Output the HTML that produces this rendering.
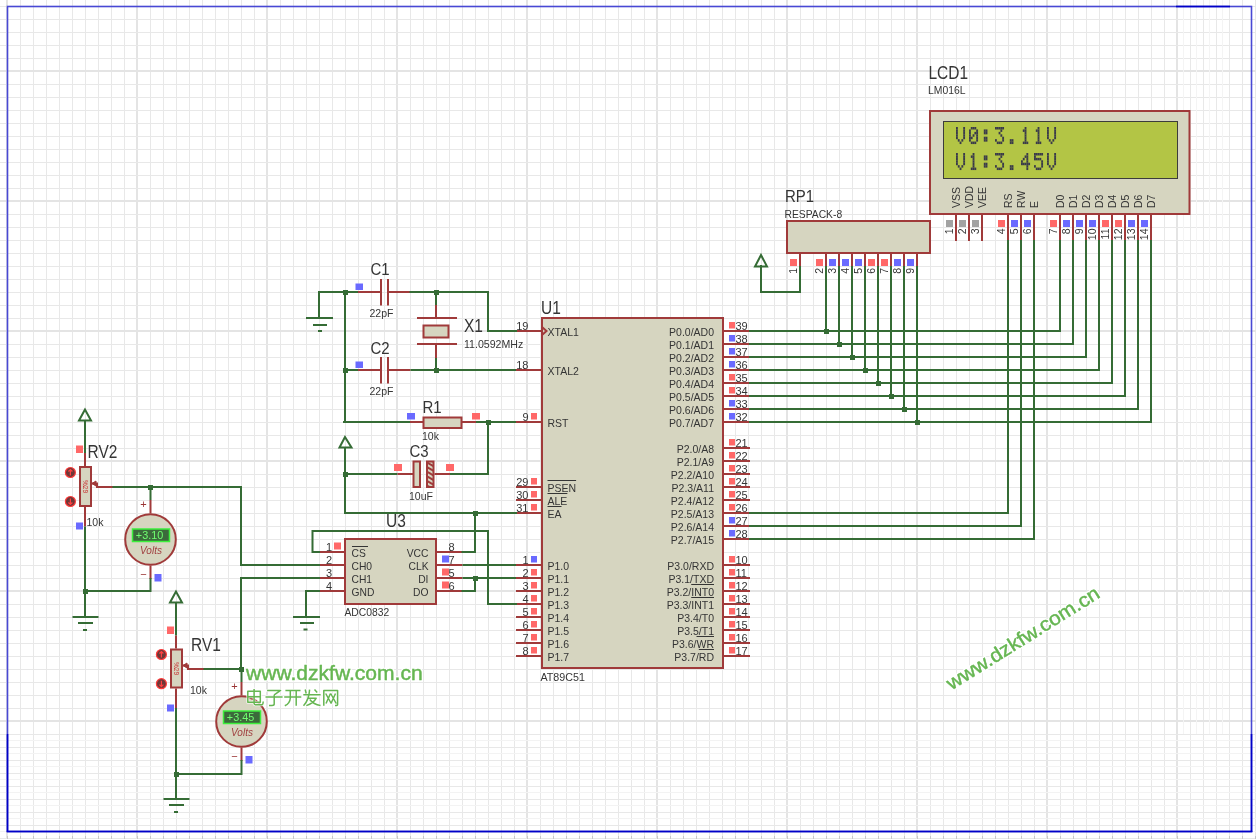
<!DOCTYPE html>
<html><head><meta charset="utf-8"><style>
html,body{margin:0;padding:0;background:#fff;}
svg{display:block;will-change:transform;}
text{font-family:"Liberation Sans",sans-serif;}
</style></head><body>
<svg width="1256" height="839" viewBox="0 0 1256 839">
<rect width="1256" height="839" fill="#fff"/>
<rect x="6" y="0" width="2" height="839" fill="#e4e4e4"/><rect x="20" y="0" width="1" height="839" fill="#e8e8e8"/><rect x="33" y="0" width="1" height="839" fill="#e8e8e8"/><rect x="46" y="0" width="1" height="839" fill="#e8e8e8"/><rect x="59" y="0" width="1" height="839" fill="#e8e8e8"/><rect x="72" y="0" width="1" height="839" fill="#e8e8e8"/><rect x="85" y="0" width="1" height="839" fill="#e8e8e8"/><rect x="98" y="0" width="1" height="839" fill="#e8e8e8"/><rect x="111" y="0" width="1" height="839" fill="#e8e8e8"/><rect x="124" y="0" width="1" height="839" fill="#e8e8e8"/><rect x="136" y="0" width="2" height="839" fill="#e4e4e4"/><rect x="150" y="0" width="1" height="839" fill="#e8e8e8"/><rect x="163" y="0" width="1" height="839" fill="#e8e8e8"/><rect x="176" y="0" width="1" height="839" fill="#e8e8e8"/><rect x="189" y="0" width="1" height="839" fill="#e8e8e8"/><rect x="202" y="0" width="1" height="839" fill="#e8e8e8"/><rect x="215" y="0" width="1" height="839" fill="#e8e8e8"/><rect x="228" y="0" width="1" height="839" fill="#e8e8e8"/><rect x="241" y="0" width="1" height="839" fill="#e8e8e8"/><rect x="254" y="0" width="1" height="839" fill="#e8e8e8"/><rect x="266" y="0" width="2" height="839" fill="#e4e4e4"/><rect x="280" y="0" width="1" height="839" fill="#e8e8e8"/><rect x="293" y="0" width="1" height="839" fill="#e8e8e8"/><rect x="306" y="0" width="1" height="839" fill="#e8e8e8"/><rect x="319" y="0" width="1" height="839" fill="#e8e8e8"/><rect x="332" y="0" width="1" height="839" fill="#e8e8e8"/><rect x="345" y="0" width="1" height="839" fill="#e8e8e8"/><rect x="358" y="0" width="1" height="839" fill="#e8e8e8"/><rect x="371" y="0" width="1" height="839" fill="#e8e8e8"/><rect x="384" y="0" width="1" height="839" fill="#e8e8e8"/><rect x="396" y="0" width="2" height="839" fill="#e4e4e4"/><rect x="410" y="0" width="1" height="839" fill="#e8e8e8"/><rect x="423" y="0" width="1" height="839" fill="#e8e8e8"/><rect x="436" y="0" width="1" height="839" fill="#e8e8e8"/><rect x="449" y="0" width="1" height="839" fill="#e8e8e8"/><rect x="462" y="0" width="1" height="839" fill="#e8e8e8"/><rect x="475" y="0" width="1" height="839" fill="#e8e8e8"/><rect x="488" y="0" width="1" height="839" fill="#e8e8e8"/><rect x="501" y="0" width="1" height="839" fill="#e8e8e8"/><rect x="514" y="0" width="1" height="839" fill="#e8e8e8"/><rect x="526" y="0" width="2" height="839" fill="#e4e4e4"/><rect x="540" y="0" width="1" height="839" fill="#e8e8e8"/><rect x="553" y="0" width="1" height="839" fill="#e8e8e8"/><rect x="566" y="0" width="1" height="839" fill="#e8e8e8"/><rect x="579" y="0" width="1" height="839" fill="#e8e8e8"/><rect x="592" y="0" width="1" height="839" fill="#e8e8e8"/><rect x="605" y="0" width="1" height="839" fill="#e8e8e8"/><rect x="618" y="0" width="1" height="839" fill="#e8e8e8"/><rect x="631" y="0" width="1" height="839" fill="#e8e8e8"/><rect x="644" y="0" width="1" height="839" fill="#e8e8e8"/><rect x="656" y="0" width="2" height="839" fill="#e4e4e4"/><rect x="670" y="0" width="1" height="839" fill="#e8e8e8"/><rect x="683" y="0" width="1" height="839" fill="#e8e8e8"/><rect x="696" y="0" width="1" height="839" fill="#e8e8e8"/><rect x="709" y="0" width="1" height="839" fill="#e8e8e8"/><rect x="722" y="0" width="1" height="839" fill="#e8e8e8"/><rect x="735" y="0" width="1" height="839" fill="#e8e8e8"/><rect x="748" y="0" width="1" height="839" fill="#e8e8e8"/><rect x="761" y="0" width="1" height="839" fill="#e8e8e8"/><rect x="774" y="0" width="1" height="839" fill="#e8e8e8"/><rect x="786" y="0" width="2" height="839" fill="#e4e4e4"/><rect x="800" y="0" width="1" height="839" fill="#e8e8e8"/><rect x="813" y="0" width="1" height="839" fill="#e8e8e8"/><rect x="826" y="0" width="1" height="839" fill="#e8e8e8"/><rect x="839" y="0" width="1" height="839" fill="#e8e8e8"/><rect x="852" y="0" width="1" height="839" fill="#e8e8e8"/><rect x="865" y="0" width="1" height="839" fill="#e8e8e8"/><rect x="878" y="0" width="1" height="839" fill="#e8e8e8"/><rect x="891" y="0" width="1" height="839" fill="#e8e8e8"/><rect x="904" y="0" width="1" height="839" fill="#e8e8e8"/><rect x="916" y="0" width="2" height="839" fill="#e4e4e4"/><rect x="930" y="0" width="1" height="839" fill="#e8e8e8"/><rect x="943" y="0" width="1" height="839" fill="#e8e8e8"/><rect x="956" y="0" width="1" height="839" fill="#e8e8e8"/><rect x="969" y="0" width="1" height="839" fill="#e8e8e8"/><rect x="982" y="0" width="1" height="839" fill="#e8e8e8"/><rect x="995" y="0" width="1" height="839" fill="#e8e8e8"/><rect x="1008" y="0" width="1" height="839" fill="#e8e8e8"/><rect x="1021" y="0" width="1" height="839" fill="#e8e8e8"/><rect x="1034" y="0" width="1" height="839" fill="#e8e8e8"/><rect x="1046" y="0" width="2" height="839" fill="#e4e4e4"/><rect x="1060" y="0" width="1" height="839" fill="#e8e8e8"/><rect x="1073" y="0" width="1" height="839" fill="#e8e8e8"/><rect x="1086" y="0" width="1" height="839" fill="#e8e8e8"/><rect x="1099" y="0" width="1" height="839" fill="#e8e8e8"/><rect x="1112" y="0" width="1" height="839" fill="#e8e8e8"/><rect x="1125" y="0" width="1" height="839" fill="#e8e8e8"/><rect x="1138" y="0" width="1" height="839" fill="#e8e8e8"/><rect x="1151" y="0" width="1" height="839" fill="#e8e8e8"/><rect x="1164" y="0" width="1" height="839" fill="#e8e8e8"/><rect x="1176" y="0" width="2" height="839" fill="#e4e4e4"/><rect x="1190" y="0" width="1" height="839" fill="#e8e8e8"/><rect x="1203" y="0" width="1" height="839" fill="#e8e8e8"/><rect x="1216" y="0" width="1" height="839" fill="#e8e8e8"/><rect x="1229" y="0" width="1" height="839" fill="#e8e8e8"/><rect x="1242" y="0" width="1" height="839" fill="#e8e8e8"/><rect x="1255" y="0" width="1" height="839" fill="#e8e8e8"/><rect x="0" y="6" width="1256" height="1" fill="#e8e8e8"/><rect x="0" y="19" width="1256" height="1" fill="#e8e8e8"/><rect x="0" y="32" width="1256" height="1" fill="#e8e8e8"/><rect x="0" y="45" width="1256" height="1" fill="#e8e8e8"/><rect x="0" y="58" width="1256" height="1" fill="#e8e8e8"/><rect x="0" y="70" width="1256" height="2" fill="#e4e4e4"/><rect x="0" y="84" width="1256" height="1" fill="#e8e8e8"/><rect x="0" y="97" width="1256" height="1" fill="#e8e8e8"/><rect x="0" y="110" width="1256" height="1" fill="#e8e8e8"/><rect x="0" y="123" width="1256" height="1" fill="#e8e8e8"/><rect x="0" y="136" width="1256" height="1" fill="#e8e8e8"/><rect x="0" y="149" width="1256" height="1" fill="#e8e8e8"/><rect x="0" y="162" width="1256" height="1" fill="#e8e8e8"/><rect x="0" y="175" width="1256" height="1" fill="#e8e8e8"/><rect x="0" y="188" width="1256" height="1" fill="#e8e8e8"/><rect x="0" y="200" width="1256" height="2" fill="#e4e4e4"/><rect x="0" y="214" width="1256" height="1" fill="#e8e8e8"/><rect x="0" y="227" width="1256" height="1" fill="#e8e8e8"/><rect x="0" y="240" width="1256" height="1" fill="#e8e8e8"/><rect x="0" y="253" width="1256" height="1" fill="#e8e8e8"/><rect x="0" y="266" width="1256" height="1" fill="#e8e8e8"/><rect x="0" y="279" width="1256" height="1" fill="#e8e8e8"/><rect x="0" y="292" width="1256" height="1" fill="#e8e8e8"/><rect x="0" y="305" width="1256" height="1" fill="#e8e8e8"/><rect x="0" y="318" width="1256" height="1" fill="#e8e8e8"/><rect x="0" y="330" width="1256" height="2" fill="#e4e4e4"/><rect x="0" y="344" width="1256" height="1" fill="#e8e8e8"/><rect x="0" y="357" width="1256" height="1" fill="#e8e8e8"/><rect x="0" y="370" width="1256" height="1" fill="#e8e8e8"/><rect x="0" y="383" width="1256" height="1" fill="#e8e8e8"/><rect x="0" y="396" width="1256" height="1" fill="#e8e8e8"/><rect x="0" y="409" width="1256" height="1" fill="#e8e8e8"/><rect x="0" y="422" width="1256" height="1" fill="#e8e8e8"/><rect x="0" y="435" width="1256" height="1" fill="#e8e8e8"/><rect x="0" y="448" width="1256" height="1" fill="#e8e8e8"/><rect x="0" y="460" width="1256" height="2" fill="#e4e4e4"/><rect x="0" y="474" width="1256" height="1" fill="#e8e8e8"/><rect x="0" y="487" width="1256" height="1" fill="#e8e8e8"/><rect x="0" y="500" width="1256" height="1" fill="#e8e8e8"/><rect x="0" y="513" width="1256" height="1" fill="#e8e8e8"/><rect x="0" y="526" width="1256" height="1" fill="#e8e8e8"/><rect x="0" y="539" width="1256" height="1" fill="#e8e8e8"/><rect x="0" y="552" width="1256" height="1" fill="#e8e8e8"/><rect x="0" y="565" width="1256" height="1" fill="#e8e8e8"/><rect x="0" y="578" width="1256" height="1" fill="#e8e8e8"/><rect x="0" y="590" width="1256" height="2" fill="#e4e4e4"/><rect x="0" y="604" width="1256" height="1" fill="#e8e8e8"/><rect x="0" y="617" width="1256" height="1" fill="#e8e8e8"/><rect x="0" y="630" width="1256" height="1" fill="#e8e8e8"/><rect x="0" y="643" width="1256" height="1" fill="#e8e8e8"/><rect x="0" y="656" width="1256" height="1" fill="#e8e8e8"/><rect x="0" y="669" width="1256" height="1" fill="#e8e8e8"/><rect x="0" y="682" width="1256" height="1" fill="#e8e8e8"/><rect x="0" y="695" width="1256" height="1" fill="#e8e8e8"/><rect x="0" y="708" width="1256" height="1" fill="#e8e8e8"/><rect x="0" y="720" width="1256" height="2" fill="#e4e4e4"/><rect x="0" y="734" width="1256" height="1" fill="#e8e8e8"/><rect x="0" y="747" width="1256" height="1" fill="#e8e8e8"/><rect x="0" y="760" width="1256" height="1" fill="#e8e8e8"/><rect x="0" y="773" width="1256" height="1" fill="#e8e8e8"/><rect x="0" y="786" width="1256" height="1" fill="#e8e8e8"/><rect x="0" y="799" width="1256" height="1" fill="#e8e8e8"/><rect x="0" y="812" width="1256" height="1" fill="#e8e8e8"/><rect x="0" y="825" width="1256" height="1" fill="#e8e8e8"/><rect x="0" y="838" width="1256" height="1" fill="#e8e8e8"/>
<rect x="0" y="740" width="1256" height="1" fill="#f3f3f3"/><rect x="0" y="753" width="1256" height="1" fill="#f3f3f3"/><rect x="0" y="766" width="1256" height="1" fill="#f3f3f3"/><rect x="0" y="779" width="1256" height="1" fill="#f3f3f3"/><rect x="0" y="792" width="1256" height="1" fill="#f3f3f3"/><rect x="0" y="805" width="1256" height="1" fill="#f3f3f3"/><rect x="0" y="818" width="1256" height="1" fill="#f3f3f3"/><rect x="0" y="831" width="1256" height="1" fill="#f3f3f3"/><rect x="1183" y="0" width="1" height="734" fill="#f4f4f4"/><rect x="1196" y="0" width="1" height="734" fill="#f4f4f4"/><rect x="1209" y="0" width="1" height="734" fill="#f4f4f4"/><rect x="1222" y="0" width="1" height="734" fill="#f4f4f4"/>
<rect x="7.5" y="6.5" width="1244" height="825" fill="none" stroke="#4848d4" stroke-width="1.6"/>
<rect x="6.7" y="734" width="1.6" height="98" fill="#0000c8"/>
<rect x="1250.7" y="734" width="1.6" height="98" fill="#0000c8"/>
<rect x="6.7" y="830.7" width="1245.6" height="1.6" fill="#0000c8"/>
<rect x="1176" y="5.7" width="54" height="1.6" fill="#0000c8"/>
<rect x="7" y="836" width="1" height="3" fill="#c8c8c8"/><rect x="20" y="836" width="1" height="3" fill="#c8c8c8"/><rect x="33" y="836" width="1" height="3" fill="#c8c8c8"/><rect x="46" y="836" width="1" height="3" fill="#c8c8c8"/><rect x="59" y="836" width="1" height="3" fill="#c8c8c8"/><rect x="72" y="836" width="1" height="3" fill="#c8c8c8"/><rect x="85" y="836" width="1" height="3" fill="#c8c8c8"/><rect x="98" y="836" width="1" height="3" fill="#c8c8c8"/><rect x="111" y="836" width="1" height="3" fill="#c8c8c8"/><rect x="124" y="836" width="1" height="3" fill="#c8c8c8"/><rect x="137" y="836" width="1" height="3" fill="#c8c8c8"/><rect x="150" y="836" width="1" height="3" fill="#c8c8c8"/><rect x="163" y="836" width="1" height="3" fill="#c8c8c8"/><rect x="176" y="836" width="1" height="3" fill="#c8c8c8"/><rect x="189" y="836" width="1" height="3" fill="#c8c8c8"/><rect x="202" y="836" width="1" height="3" fill="#c8c8c8"/><rect x="215" y="836" width="1" height="3" fill="#c8c8c8"/><rect x="228" y="836" width="1" height="3" fill="#c8c8c8"/><rect x="241" y="836" width="1" height="3" fill="#c8c8c8"/><rect x="254" y="836" width="1" height="3" fill="#c8c8c8"/><rect x="267" y="836" width="1" height="3" fill="#c8c8c8"/><rect x="280" y="836" width="1" height="3" fill="#c8c8c8"/><rect x="293" y="836" width="1" height="3" fill="#c8c8c8"/><rect x="306" y="836" width="1" height="3" fill="#c8c8c8"/><rect x="319" y="836" width="1" height="3" fill="#c8c8c8"/><rect x="332" y="836" width="1" height="3" fill="#c8c8c8"/><rect x="345" y="836" width="1" height="3" fill="#c8c8c8"/><rect x="358" y="836" width="1" height="3" fill="#c8c8c8"/><rect x="371" y="836" width="1" height="3" fill="#c8c8c8"/><rect x="384" y="836" width="1" height="3" fill="#c8c8c8"/><rect x="397" y="836" width="1" height="3" fill="#c8c8c8"/><rect x="410" y="836" width="1" height="3" fill="#c8c8c8"/><rect x="423" y="836" width="1" height="3" fill="#c8c8c8"/><rect x="436" y="836" width="1" height="3" fill="#c8c8c8"/><rect x="449" y="836" width="1" height="3" fill="#c8c8c8"/><rect x="462" y="836" width="1" height="3" fill="#c8c8c8"/><rect x="475" y="836" width="1" height="3" fill="#c8c8c8"/><rect x="488" y="836" width="1" height="3" fill="#c8c8c8"/><rect x="501" y="836" width="1" height="3" fill="#c8c8c8"/><rect x="514" y="836" width="1" height="3" fill="#c8c8c8"/><rect x="527" y="836" width="1" height="3" fill="#c8c8c8"/><rect x="540" y="836" width="1" height="3" fill="#c8c8c8"/><rect x="553" y="836" width="1" height="3" fill="#c8c8c8"/><rect x="566" y="836" width="1" height="3" fill="#c8c8c8"/><rect x="579" y="836" width="1" height="3" fill="#c8c8c8"/><rect x="592" y="836" width="1" height="3" fill="#c8c8c8"/><rect x="605" y="836" width="1" height="3" fill="#c8c8c8"/><rect x="618" y="836" width="1" height="3" fill="#c8c8c8"/><rect x="631" y="836" width="1" height="3" fill="#c8c8c8"/><rect x="644" y="836" width="1" height="3" fill="#c8c8c8"/><rect x="657" y="836" width="1" height="3" fill="#c8c8c8"/><rect x="670" y="836" width="1" height="3" fill="#c8c8c8"/><rect x="683" y="836" width="1" height="3" fill="#c8c8c8"/><rect x="696" y="836" width="1" height="3" fill="#c8c8c8"/><rect x="709" y="836" width="1" height="3" fill="#c8c8c8"/><rect x="722" y="836" width="1" height="3" fill="#c8c8c8"/><rect x="735" y="836" width="1" height="3" fill="#c8c8c8"/><rect x="748" y="836" width="1" height="3" fill="#c8c8c8"/><rect x="761" y="836" width="1" height="3" fill="#c8c8c8"/><rect x="774" y="836" width="1" height="3" fill="#c8c8c8"/><rect x="787" y="836" width="1" height="3" fill="#c8c8c8"/><rect x="800" y="836" width="1" height="3" fill="#c8c8c8"/><rect x="813" y="836" width="1" height="3" fill="#c8c8c8"/><rect x="826" y="836" width="1" height="3" fill="#c8c8c8"/><rect x="839" y="836" width="1" height="3" fill="#c8c8c8"/><rect x="852" y="836" width="1" height="3" fill="#c8c8c8"/><rect x="865" y="836" width="1" height="3" fill="#c8c8c8"/><rect x="878" y="836" width="1" height="3" fill="#c8c8c8"/><rect x="891" y="836" width="1" height="3" fill="#c8c8c8"/><rect x="904" y="836" width="1" height="3" fill="#c8c8c8"/><rect x="917" y="836" width="1" height="3" fill="#c8c8c8"/><rect x="930" y="836" width="1" height="3" fill="#c8c8c8"/><rect x="943" y="836" width="1" height="3" fill="#c8c8c8"/><rect x="956" y="836" width="1" height="3" fill="#c8c8c8"/><rect x="969" y="836" width="1" height="3" fill="#c8c8c8"/><rect x="982" y="836" width="1" height="3" fill="#c8c8c8"/><rect x="995" y="836" width="1" height="3" fill="#c8c8c8"/><rect x="1008" y="836" width="1" height="3" fill="#c8c8c8"/><rect x="1021" y="836" width="1" height="3" fill="#c8c8c8"/><rect x="1034" y="836" width="1" height="3" fill="#c8c8c8"/><rect x="1047" y="836" width="1" height="3" fill="#c8c8c8"/><rect x="1060" y="836" width="1" height="3" fill="#c8c8c8"/><rect x="1073" y="836" width="1" height="3" fill="#c8c8c8"/><rect x="1086" y="836" width="1" height="3" fill="#c8c8c8"/><rect x="1099" y="836" width="1" height="3" fill="#c8c8c8"/><rect x="1112" y="836" width="1" height="3" fill="#c8c8c8"/><rect x="1125" y="836" width="1" height="3" fill="#c8c8c8"/><rect x="1138" y="836" width="1" height="3" fill="#c8c8c8"/><rect x="1151" y="836" width="1" height="3" fill="#c8c8c8"/><rect x="1164" y="836" width="1" height="3" fill="#c8c8c8"/><rect x="1177" y="836" width="1" height="3" fill="#c8c8c8"/><rect x="1190" y="836" width="1" height="3" fill="#c8c8c8"/><rect x="1203" y="836" width="1" height="3" fill="#c8c8c8"/><rect x="1216" y="836" width="1" height="3" fill="#c8c8c8"/><rect x="1229" y="836" width="1" height="3" fill="#c8c8c8"/><rect x="1242" y="836" width="1" height="3" fill="#c8c8c8"/><rect x="1255" y="836" width="1" height="3" fill="#c8c8c8"/>
<text transform="translate(928.5,79) scale(1,1.15)" font-size="15.5" text-anchor="start" fill="#353535">LCD1</text>
<text x="928" y="93.6" font-size="10.4" text-anchor="start" fill="#353535">LM016L</text>
<rect x="930" y="111" width="259.5" height="103" fill="#d6d5c0" stroke="#a03a3a" stroke-width="2"/>
<rect x="943.5" y="121.5" width="234" height="57" fill="#b3c545" stroke="#3c3c3c" stroke-width="1"/>
<g fill="#3a3a4a"><rect x="956.00" y="127.00" width="1.85" height="2.48"/><rect x="963.20" y="127.00" width="1.85" height="2.48"/><rect x="956.00" y="129.43" width="1.85" height="2.48"/><rect x="963.20" y="129.43" width="1.85" height="2.48"/><rect x="956.00" y="131.86" width="1.85" height="2.48"/><rect x="963.20" y="131.86" width="1.85" height="2.48"/><rect x="956.00" y="134.29" width="1.85" height="2.48"/><rect x="963.20" y="134.29" width="1.85" height="2.48"/><rect x="956.00" y="136.72" width="1.85" height="2.48"/><rect x="963.20" y="136.72" width="1.85" height="2.48"/><rect x="957.80" y="139.15" width="1.85" height="2.48"/><rect x="961.40" y="139.15" width="1.85" height="2.48"/><rect x="959.60" y="141.58" width="1.85" height="2.48"/><rect x="970.80" y="127.00" width="1.85" height="2.48"/><rect x="972.60" y="127.00" width="1.85" height="2.48"/><rect x="974.40" y="127.00" width="1.85" height="2.48"/><rect x="969.00" y="129.43" width="1.85" height="2.48"/><rect x="976.20" y="129.43" width="1.85" height="2.48"/><rect x="969.00" y="131.86" width="1.85" height="2.48"/><rect x="974.40" y="131.86" width="1.85" height="2.48"/><rect x="976.20" y="131.86" width="1.85" height="2.48"/><rect x="969.00" y="134.29" width="1.85" height="2.48"/><rect x="972.60" y="134.29" width="1.85" height="2.48"/><rect x="976.20" y="134.29" width="1.85" height="2.48"/><rect x="969.00" y="136.72" width="1.85" height="2.48"/><rect x="970.80" y="136.72" width="1.85" height="2.48"/><rect x="976.20" y="136.72" width="1.85" height="2.48"/><rect x="969.00" y="139.15" width="1.85" height="2.48"/><rect x="976.20" y="139.15" width="1.85" height="2.48"/><rect x="970.80" y="141.58" width="1.85" height="2.48"/><rect x="972.60" y="141.58" width="1.85" height="2.48"/><rect x="974.40" y="141.58" width="1.85" height="2.48"/><rect x="983.80" y="129.43" width="1.85" height="2.48"/><rect x="985.60" y="129.43" width="1.85" height="2.48"/><rect x="983.80" y="131.86" width="1.85" height="2.48"/><rect x="985.60" y="131.86" width="1.85" height="2.48"/><rect x="983.80" y="136.72" width="1.85" height="2.48"/><rect x="985.60" y="136.72" width="1.85" height="2.48"/><rect x="983.80" y="139.15" width="1.85" height="2.48"/><rect x="985.60" y="139.15" width="1.85" height="2.48"/><rect x="995.00" y="127.00" width="1.85" height="2.48"/><rect x="996.80" y="127.00" width="1.85" height="2.48"/><rect x="998.60" y="127.00" width="1.85" height="2.48"/><rect x="1000.40" y="127.00" width="1.85" height="2.48"/><rect x="1002.20" y="127.00" width="1.85" height="2.48"/><rect x="1000.40" y="129.43" width="1.85" height="2.48"/><rect x="998.60" y="131.86" width="1.85" height="2.48"/><rect x="1000.40" y="134.29" width="1.85" height="2.48"/><rect x="1002.20" y="136.72" width="1.85" height="2.48"/><rect x="995.00" y="139.15" width="1.85" height="2.48"/><rect x="1002.20" y="139.15" width="1.85" height="2.48"/><rect x="996.80" y="141.58" width="1.85" height="2.48"/><rect x="998.60" y="141.58" width="1.85" height="2.48"/><rect x="1000.40" y="141.58" width="1.85" height="2.48"/><rect x="1009.80" y="139.15" width="1.85" height="2.48"/><rect x="1011.60" y="139.15" width="1.85" height="2.48"/><rect x="1009.80" y="141.58" width="1.85" height="2.48"/><rect x="1011.60" y="141.58" width="1.85" height="2.48"/><rect x="1024.60" y="127.00" width="1.85" height="2.48"/><rect x="1022.80" y="129.43" width="1.85" height="2.48"/><rect x="1024.60" y="129.43" width="1.85" height="2.48"/><rect x="1024.60" y="131.86" width="1.85" height="2.48"/><rect x="1024.60" y="134.29" width="1.85" height="2.48"/><rect x="1024.60" y="136.72" width="1.85" height="2.48"/><rect x="1024.60" y="139.15" width="1.85" height="2.48"/><rect x="1022.80" y="141.58" width="1.85" height="2.48"/><rect x="1024.60" y="141.58" width="1.85" height="2.48"/><rect x="1026.40" y="141.58" width="1.85" height="2.48"/><rect x="1037.60" y="127.00" width="1.85" height="2.48"/><rect x="1035.80" y="129.43" width="1.85" height="2.48"/><rect x="1037.60" y="129.43" width="1.85" height="2.48"/><rect x="1037.60" y="131.86" width="1.85" height="2.48"/><rect x="1037.60" y="134.29" width="1.85" height="2.48"/><rect x="1037.60" y="136.72" width="1.85" height="2.48"/><rect x="1037.60" y="139.15" width="1.85" height="2.48"/><rect x="1035.80" y="141.58" width="1.85" height="2.48"/><rect x="1037.60" y="141.58" width="1.85" height="2.48"/><rect x="1039.40" y="141.58" width="1.85" height="2.48"/><rect x="1047.00" y="127.00" width="1.85" height="2.48"/><rect x="1054.20" y="127.00" width="1.85" height="2.48"/><rect x="1047.00" y="129.43" width="1.85" height="2.48"/><rect x="1054.20" y="129.43" width="1.85" height="2.48"/><rect x="1047.00" y="131.86" width="1.85" height="2.48"/><rect x="1054.20" y="131.86" width="1.85" height="2.48"/><rect x="1047.00" y="134.29" width="1.85" height="2.48"/><rect x="1054.20" y="134.29" width="1.85" height="2.48"/><rect x="1047.00" y="136.72" width="1.85" height="2.48"/><rect x="1054.20" y="136.72" width="1.85" height="2.48"/><rect x="1048.80" y="139.15" width="1.85" height="2.48"/><rect x="1052.40" y="139.15" width="1.85" height="2.48"/><rect x="1050.60" y="141.58" width="1.85" height="2.48"/></g>
<g fill="#3a3a4a"><rect x="956.00" y="153.00" width="1.85" height="2.48"/><rect x="963.20" y="153.00" width="1.85" height="2.48"/><rect x="956.00" y="155.43" width="1.85" height="2.48"/><rect x="963.20" y="155.43" width="1.85" height="2.48"/><rect x="956.00" y="157.86" width="1.85" height="2.48"/><rect x="963.20" y="157.86" width="1.85" height="2.48"/><rect x="956.00" y="160.29" width="1.85" height="2.48"/><rect x="963.20" y="160.29" width="1.85" height="2.48"/><rect x="956.00" y="162.72" width="1.85" height="2.48"/><rect x="963.20" y="162.72" width="1.85" height="2.48"/><rect x="957.80" y="165.15" width="1.85" height="2.48"/><rect x="961.40" y="165.15" width="1.85" height="2.48"/><rect x="959.60" y="167.58" width="1.85" height="2.48"/><rect x="972.60" y="153.00" width="1.85" height="2.48"/><rect x="970.80" y="155.43" width="1.85" height="2.48"/><rect x="972.60" y="155.43" width="1.85" height="2.48"/><rect x="972.60" y="157.86" width="1.85" height="2.48"/><rect x="972.60" y="160.29" width="1.85" height="2.48"/><rect x="972.60" y="162.72" width="1.85" height="2.48"/><rect x="972.60" y="165.15" width="1.85" height="2.48"/><rect x="970.80" y="167.58" width="1.85" height="2.48"/><rect x="972.60" y="167.58" width="1.85" height="2.48"/><rect x="974.40" y="167.58" width="1.85" height="2.48"/><rect x="983.80" y="155.43" width="1.85" height="2.48"/><rect x="985.60" y="155.43" width="1.85" height="2.48"/><rect x="983.80" y="157.86" width="1.85" height="2.48"/><rect x="985.60" y="157.86" width="1.85" height="2.48"/><rect x="983.80" y="162.72" width="1.85" height="2.48"/><rect x="985.60" y="162.72" width="1.85" height="2.48"/><rect x="983.80" y="165.15" width="1.85" height="2.48"/><rect x="985.60" y="165.15" width="1.85" height="2.48"/><rect x="995.00" y="153.00" width="1.85" height="2.48"/><rect x="996.80" y="153.00" width="1.85" height="2.48"/><rect x="998.60" y="153.00" width="1.85" height="2.48"/><rect x="1000.40" y="153.00" width="1.85" height="2.48"/><rect x="1002.20" y="153.00" width="1.85" height="2.48"/><rect x="1000.40" y="155.43" width="1.85" height="2.48"/><rect x="998.60" y="157.86" width="1.85" height="2.48"/><rect x="1000.40" y="160.29" width="1.85" height="2.48"/><rect x="1002.20" y="162.72" width="1.85" height="2.48"/><rect x="995.00" y="165.15" width="1.85" height="2.48"/><rect x="1002.20" y="165.15" width="1.85" height="2.48"/><rect x="996.80" y="167.58" width="1.85" height="2.48"/><rect x="998.60" y="167.58" width="1.85" height="2.48"/><rect x="1000.40" y="167.58" width="1.85" height="2.48"/><rect x="1009.80" y="165.15" width="1.85" height="2.48"/><rect x="1011.60" y="165.15" width="1.85" height="2.48"/><rect x="1009.80" y="167.58" width="1.85" height="2.48"/><rect x="1011.60" y="167.58" width="1.85" height="2.48"/><rect x="1026.40" y="153.00" width="1.85" height="2.48"/><rect x="1024.60" y="155.43" width="1.85" height="2.48"/><rect x="1026.40" y="155.43" width="1.85" height="2.48"/><rect x="1022.80" y="157.86" width="1.85" height="2.48"/><rect x="1026.40" y="157.86" width="1.85" height="2.48"/><rect x="1021.00" y="160.29" width="1.85" height="2.48"/><rect x="1026.40" y="160.29" width="1.85" height="2.48"/><rect x="1021.00" y="162.72" width="1.85" height="2.48"/><rect x="1022.80" y="162.72" width="1.85" height="2.48"/><rect x="1024.60" y="162.72" width="1.85" height="2.48"/><rect x="1026.40" y="162.72" width="1.85" height="2.48"/><rect x="1028.20" y="162.72" width="1.85" height="2.48"/><rect x="1026.40" y="165.15" width="1.85" height="2.48"/><rect x="1026.40" y="167.58" width="1.85" height="2.48"/><rect x="1034.00" y="153.00" width="1.85" height="2.48"/><rect x="1035.80" y="153.00" width="1.85" height="2.48"/><rect x="1037.60" y="153.00" width="1.85" height="2.48"/><rect x="1039.40" y="153.00" width="1.85" height="2.48"/><rect x="1041.20" y="153.00" width="1.85" height="2.48"/><rect x="1034.00" y="155.43" width="1.85" height="2.48"/><rect x="1034.00" y="157.86" width="1.85" height="2.48"/><rect x="1035.80" y="157.86" width="1.85" height="2.48"/><rect x="1037.60" y="157.86" width="1.85" height="2.48"/><rect x="1039.40" y="157.86" width="1.85" height="2.48"/><rect x="1041.20" y="160.29" width="1.85" height="2.48"/><rect x="1041.20" y="162.72" width="1.85" height="2.48"/><rect x="1034.00" y="165.15" width="1.85" height="2.48"/><rect x="1041.20" y="165.15" width="1.85" height="2.48"/><rect x="1035.80" y="167.58" width="1.85" height="2.48"/><rect x="1037.60" y="167.58" width="1.85" height="2.48"/><rect x="1039.40" y="167.58" width="1.85" height="2.48"/><rect x="1047.00" y="153.00" width="1.85" height="2.48"/><rect x="1054.20" y="153.00" width="1.85" height="2.48"/><rect x="1047.00" y="155.43" width="1.85" height="2.48"/><rect x="1054.20" y="155.43" width="1.85" height="2.48"/><rect x="1047.00" y="157.86" width="1.85" height="2.48"/><rect x="1054.20" y="157.86" width="1.85" height="2.48"/><rect x="1047.00" y="160.29" width="1.85" height="2.48"/><rect x="1054.20" y="160.29" width="1.85" height="2.48"/><rect x="1047.00" y="162.72" width="1.85" height="2.48"/><rect x="1054.20" y="162.72" width="1.85" height="2.48"/><rect x="1048.80" y="165.15" width="1.85" height="2.48"/><rect x="1052.40" y="165.15" width="1.85" height="2.48"/><rect x="1050.60" y="167.58" width="1.85" height="2.48"/></g>
<line x1="956" y1="214" x2="956" y2="241" stroke="#a03a3a" stroke-width="2"/>
<rect x="946" y="220" width="7" height="7" fill="#a2a2a2"/>
<text transform="translate(960,208) rotate(-90)" font-size="10.5" fill="#353535">VSS</text>
<text transform="translate(953.4,228.5) rotate(-90)" font-size="10.5" text-anchor="end" fill="#353535">1</text>
<line x1="969" y1="214" x2="969" y2="241" stroke="#a03a3a" stroke-width="2"/>
<rect x="959" y="220" width="7" height="7" fill="#a2a2a2"/>
<text transform="translate(973,208) rotate(-90)" font-size="10.5" fill="#353535">VDD</text>
<text transform="translate(966.4,228.5) rotate(-90)" font-size="10.5" text-anchor="end" fill="#353535">2</text>
<line x1="982" y1="214" x2="982" y2="241" stroke="#a03a3a" stroke-width="2"/>
<rect x="972" y="220" width="7" height="7" fill="#a2a2a2"/>
<text transform="translate(986,208) rotate(-90)" font-size="10.5" fill="#353535">VEE</text>
<text transform="translate(979.4,228.5) rotate(-90)" font-size="10.5" text-anchor="end" fill="#353535">3</text>
<line x1="1008" y1="214" x2="1008" y2="241" stroke="#a03a3a" stroke-width="2"/>
<rect x="998" y="220" width="7" height="7" fill="#ff6868"/>
<text transform="translate(1012,208) rotate(-90)" font-size="10.5" fill="#353535">RS</text>
<text transform="translate(1005.4,228.5) rotate(-90)" font-size="10.5" text-anchor="end" fill="#353535">4</text>
<line x1="1021" y1="214" x2="1021" y2="241" stroke="#a03a3a" stroke-width="2"/>
<rect x="1011" y="220" width="7" height="7" fill="#6a6aff"/>
<text transform="translate(1025,208) rotate(-90)" font-size="10.5" fill="#353535">RW</text>
<text transform="translate(1018.4,228.5) rotate(-90)" font-size="10.5" text-anchor="end" fill="#353535">5</text>
<line x1="1034" y1="214" x2="1034" y2="241" stroke="#a03a3a" stroke-width="2"/>
<rect x="1024" y="220" width="7" height="7" fill="#6a6aff"/>
<text transform="translate(1038,208) rotate(-90)" font-size="10.5" fill="#353535">E</text>
<text transform="translate(1031.4,228.5) rotate(-90)" font-size="10.5" text-anchor="end" fill="#353535">6</text>
<line x1="1060" y1="214" x2="1060" y2="241" stroke="#a03a3a" stroke-width="2"/>
<rect x="1050" y="220" width="7" height="7" fill="#ff6868"/>
<text transform="translate(1064,208) rotate(-90)" font-size="10.5" fill="#353535">D0</text>
<text transform="translate(1057.4,228.5) rotate(-90)" font-size="10.5" text-anchor="end" fill="#353535">7</text>
<line x1="1073" y1="214" x2="1073" y2="241" stroke="#a03a3a" stroke-width="2"/>
<rect x="1063" y="220" width="7" height="7" fill="#6a6aff"/>
<text transform="translate(1077,208) rotate(-90)" font-size="10.5" fill="#353535">D1</text>
<text transform="translate(1070.4,228.5) rotate(-90)" font-size="10.5" text-anchor="end" fill="#353535">8</text>
<line x1="1086" y1="214" x2="1086" y2="241" stroke="#a03a3a" stroke-width="2"/>
<rect x="1076" y="220" width="7" height="7" fill="#6a6aff"/>
<text transform="translate(1090,208) rotate(-90)" font-size="10.5" fill="#353535">D2</text>
<text transform="translate(1083.4,228.5) rotate(-90)" font-size="10.5" text-anchor="end" fill="#353535">9</text>
<line x1="1099" y1="214" x2="1099" y2="241" stroke="#a03a3a" stroke-width="2"/>
<rect x="1089" y="220" width="7" height="7" fill="#6a6aff"/>
<text transform="translate(1103,208) rotate(-90)" font-size="10.5" fill="#353535">D3</text>
<text transform="translate(1096.4,228.5) rotate(-90)" font-size="10.5" text-anchor="end" fill="#353535">10</text>
<line x1="1112" y1="214" x2="1112" y2="241" stroke="#a03a3a" stroke-width="2"/>
<rect x="1102" y="220" width="7" height="7" fill="#ff6868"/>
<text transform="translate(1116,208) rotate(-90)" font-size="10.5" fill="#353535">D4</text>
<text transform="translate(1109.4,228.5) rotate(-90)" font-size="10.5" text-anchor="end" fill="#353535">11</text>
<line x1="1125" y1="214" x2="1125" y2="241" stroke="#a03a3a" stroke-width="2"/>
<rect x="1115" y="220" width="7" height="7" fill="#ff6868"/>
<text transform="translate(1129,208) rotate(-90)" font-size="10.5" fill="#353535">D5</text>
<text transform="translate(1122.4,228.5) rotate(-90)" font-size="10.5" text-anchor="end" fill="#353535">12</text>
<line x1="1138" y1="214" x2="1138" y2="241" stroke="#a03a3a" stroke-width="2"/>
<rect x="1128" y="220" width="7" height="7" fill="#6a6aff"/>
<text transform="translate(1142,208) rotate(-90)" font-size="10.5" fill="#353535">D6</text>
<text transform="translate(1135.4,228.5) rotate(-90)" font-size="10.5" text-anchor="end" fill="#353535">13</text>
<line x1="1151" y1="214" x2="1151" y2="241" stroke="#a03a3a" stroke-width="2"/>
<rect x="1141" y="220" width="7" height="7" fill="#6a6aff"/>
<text transform="translate(1155,208) rotate(-90)" font-size="10.5" fill="#353535">D7</text>
<text transform="translate(1148.4,228.5) rotate(-90)" font-size="10.5" text-anchor="end" fill="#353535">14</text>
<text transform="translate(785,202) scale(1,1.15)" font-size="15" text-anchor="start" fill="#353535">RP1</text>
<text x="784.5" y="218" font-size="10.3" text-anchor="start" fill="#353535">RESPACK-8</text>
<rect x="787" y="221" width="143" height="32" fill="#d6d5c0" stroke="#a03a3a" stroke-width="2"/>
<line x1="800" y1="253" x2="800" y2="267" stroke="#a03a3a" stroke-width="2"/>
<rect x="790" y="259" width="7" height="7" fill="#ff6868"/>
<text transform="translate(797.4,268) rotate(-90)" font-size="10.5" text-anchor="end" fill="#353535">1</text>
<line x1="826" y1="253" x2="826" y2="267" stroke="#a03a3a" stroke-width="2"/>
<rect x="816" y="259" width="7" height="7" fill="#ff6868"/>
<text transform="translate(823.4,268) rotate(-90)" font-size="10.5" text-anchor="end" fill="#353535">2</text>
<line x1="839" y1="253" x2="839" y2="267" stroke="#a03a3a" stroke-width="2"/>
<rect x="829" y="259" width="7" height="7" fill="#6a6aff"/>
<text transform="translate(836.4,268) rotate(-90)" font-size="10.5" text-anchor="end" fill="#353535">3</text>
<line x1="852" y1="253" x2="852" y2="267" stroke="#a03a3a" stroke-width="2"/>
<rect x="842" y="259" width="7" height="7" fill="#6a6aff"/>
<text transform="translate(849.4,268) rotate(-90)" font-size="10.5" text-anchor="end" fill="#353535">4</text>
<line x1="865" y1="253" x2="865" y2="267" stroke="#a03a3a" stroke-width="2"/>
<rect x="855" y="259" width="7" height="7" fill="#6a6aff"/>
<text transform="translate(862.4,268) rotate(-90)" font-size="10.5" text-anchor="end" fill="#353535">5</text>
<line x1="878" y1="253" x2="878" y2="267" stroke="#a03a3a" stroke-width="2"/>
<rect x="868" y="259" width="7" height="7" fill="#ff6868"/>
<text transform="translate(875.4,268) rotate(-90)" font-size="10.5" text-anchor="end" fill="#353535">6</text>
<line x1="891" y1="253" x2="891" y2="267" stroke="#a03a3a" stroke-width="2"/>
<rect x="881" y="259" width="7" height="7" fill="#ff6868"/>
<text transform="translate(888.4,268) rotate(-90)" font-size="10.5" text-anchor="end" fill="#353535">7</text>
<line x1="904" y1="253" x2="904" y2="267" stroke="#a03a3a" stroke-width="2"/>
<rect x="894" y="259" width="7" height="7" fill="#6a6aff"/>
<text transform="translate(901.4,268) rotate(-90)" font-size="10.5" text-anchor="end" fill="#353535">8</text>
<line x1="917" y1="253" x2="917" y2="267" stroke="#a03a3a" stroke-width="2"/>
<rect x="907" y="259" width="7" height="7" fill="#6a6aff"/>
<text transform="translate(914.4,268) rotate(-90)" font-size="10.5" text-anchor="end" fill="#353535">9</text>
<polyline points="800,267 800,292 761,292 761,266" fill="none" stroke="#356c35" stroke-width="2" stroke-linejoin="miter" stroke-linecap="square"/>
<polygon points="761,255 755,266.5 767,266.5" fill="none" stroke="#356c35" stroke-width="2"/>
<text transform="translate(541,313.5) scale(1,1.15)" font-size="15.5" text-anchor="start" fill="#353535">U1</text>
<rect x="542" y="318" width="181" height="350" fill="#d6d5c0" stroke="#a03a3a" stroke-width="2"/>
<line x1="723" y1="331" x2="750" y2="331" stroke="#a03a3a" stroke-width="2"/>
<rect x="729" y="322" width="6" height="6.5" fill="#ff6868"/>
<text x="735.5" y="329.8" font-size="11" text-anchor="start" fill="#353535">39</text>
<text x="714" y="336" font-size="10.5" text-anchor="end" fill="#353535">P0.0/AD0</text>
<line x1="723" y1="344" x2="750" y2="344" stroke="#a03a3a" stroke-width="2"/>
<rect x="729" y="335" width="6" height="6.5" fill="#6a6aff"/>
<text x="735.5" y="342.8" font-size="11" text-anchor="start" fill="#353535">38</text>
<text x="714" y="349" font-size="10.5" text-anchor="end" fill="#353535">P0.1/AD1</text>
<line x1="723" y1="357" x2="750" y2="357" stroke="#a03a3a" stroke-width="2"/>
<rect x="729" y="348" width="6" height="6.5" fill="#6a6aff"/>
<text x="735.5" y="355.8" font-size="11" text-anchor="start" fill="#353535">37</text>
<text x="714" y="362" font-size="10.5" text-anchor="end" fill="#353535">P0.2/AD2</text>
<line x1="723" y1="370" x2="750" y2="370" stroke="#a03a3a" stroke-width="2"/>
<rect x="729" y="361" width="6" height="6.5" fill="#6a6aff"/>
<text x="735.5" y="368.8" font-size="11" text-anchor="start" fill="#353535">36</text>
<text x="714" y="375" font-size="10.5" text-anchor="end" fill="#353535">P0.3/AD3</text>
<line x1="723" y1="383" x2="750" y2="383" stroke="#a03a3a" stroke-width="2"/>
<rect x="729" y="374" width="6" height="6.5" fill="#ff6868"/>
<text x="735.5" y="381.8" font-size="11" text-anchor="start" fill="#353535">35</text>
<text x="714" y="388" font-size="10.5" text-anchor="end" fill="#353535">P0.4/AD4</text>
<line x1="723" y1="396" x2="750" y2="396" stroke="#a03a3a" stroke-width="2"/>
<rect x="729" y="387" width="6" height="6.5" fill="#ff6868"/>
<text x="735.5" y="394.8" font-size="11" text-anchor="start" fill="#353535">34</text>
<text x="714" y="401" font-size="10.5" text-anchor="end" fill="#353535">P0.5/AD5</text>
<line x1="723" y1="409" x2="750" y2="409" stroke="#a03a3a" stroke-width="2"/>
<rect x="729" y="400" width="6" height="6.5" fill="#6a6aff"/>
<text x="735.5" y="407.8" font-size="11" text-anchor="start" fill="#353535">33</text>
<text x="714" y="414" font-size="10.5" text-anchor="end" fill="#353535">P0.6/AD6</text>
<line x1="723" y1="422" x2="750" y2="422" stroke="#a03a3a" stroke-width="2"/>
<rect x="729" y="413" width="6" height="6.5" fill="#6a6aff"/>
<text x="735.5" y="420.8" font-size="11" text-anchor="start" fill="#353535">32</text>
<text x="714" y="427" font-size="10.5" text-anchor="end" fill="#353535">P0.7/AD7</text>
<line x1="723" y1="448" x2="750" y2="448" stroke="#a03a3a" stroke-width="2"/>
<rect x="729" y="439" width="6" height="6.5" fill="#ff6868"/>
<text x="735.5" y="446.8" font-size="11" text-anchor="start" fill="#353535">21</text>
<text x="714" y="453" font-size="10.5" text-anchor="end" fill="#353535">P2.0/A8</text>
<line x1="723" y1="461" x2="750" y2="461" stroke="#a03a3a" stroke-width="2"/>
<rect x="729" y="452" width="6" height="6.5" fill="#ff6868"/>
<text x="735.5" y="459.8" font-size="11" text-anchor="start" fill="#353535">22</text>
<text x="714" y="466" font-size="10.5" text-anchor="end" fill="#353535">P2.1/A9</text>
<line x1="723" y1="474" x2="750" y2="474" stroke="#a03a3a" stroke-width="2"/>
<rect x="729" y="465" width="6" height="6.5" fill="#ff6868"/>
<text x="735.5" y="472.8" font-size="11" text-anchor="start" fill="#353535">23</text>
<text x="714" y="479" font-size="10.5" text-anchor="end" fill="#353535">P2.2/A10</text>
<line x1="723" y1="487" x2="750" y2="487" stroke="#a03a3a" stroke-width="2"/>
<rect x="729" y="478" width="6" height="6.5" fill="#ff6868"/>
<text x="735.5" y="485.8" font-size="11" text-anchor="start" fill="#353535">24</text>
<text x="714" y="492" font-size="10.5" text-anchor="end" fill="#353535">P2.3/A11</text>
<line x1="723" y1="500" x2="750" y2="500" stroke="#a03a3a" stroke-width="2"/>
<rect x="729" y="491" width="6" height="6.5" fill="#ff6868"/>
<text x="735.5" y="498.8" font-size="11" text-anchor="start" fill="#353535">25</text>
<text x="714" y="505" font-size="10.5" text-anchor="end" fill="#353535">P2.4/A12</text>
<line x1="723" y1="513" x2="750" y2="513" stroke="#a03a3a" stroke-width="2"/>
<rect x="729" y="504" width="6" height="6.5" fill="#ff6868"/>
<text x="735.5" y="511.8" font-size="11" text-anchor="start" fill="#353535">26</text>
<text x="714" y="518" font-size="10.5" text-anchor="end" fill="#353535">P2.5/A13</text>
<line x1="723" y1="526" x2="750" y2="526" stroke="#a03a3a" stroke-width="2"/>
<rect x="729" y="517" width="6" height="6.5" fill="#6a6aff"/>
<text x="735.5" y="524.8" font-size="11" text-anchor="start" fill="#353535">27</text>
<text x="714" y="531" font-size="10.5" text-anchor="end" fill="#353535">P2.6/A14</text>
<line x1="723" y1="539" x2="750" y2="539" stroke="#a03a3a" stroke-width="2"/>
<rect x="729" y="530" width="6" height="6.5" fill="#6a6aff"/>
<text x="735.5" y="537.8" font-size="11" text-anchor="start" fill="#353535">28</text>
<text x="714" y="544" font-size="10.5" text-anchor="end" fill="#353535">P2.7/A15</text>
<line x1="723" y1="565" x2="750" y2="565" stroke="#a03a3a" stroke-width="2"/>
<rect x="729" y="556" width="6" height="6.5" fill="#ff6868"/>
<text x="735.5" y="563.8" font-size="11" text-anchor="start" fill="#353535">10</text>
<text x="714" y="570" font-size="10.5" text-anchor="end" fill="#353535">P3.0/RXD</text>
<line x1="723" y1="578" x2="750" y2="578" stroke="#a03a3a" stroke-width="2"/>
<rect x="729" y="569" width="6" height="6.5" fill="#ff6868"/>
<text x="735.5" y="576.8" font-size="11" text-anchor="start" fill="#353535">11</text>
<text x="714" y="583" font-size="10.5" text-anchor="end" fill="#353535">P3.1/TXD</text>
<line x1="723" y1="591" x2="750" y2="591" stroke="#a03a3a" stroke-width="2"/>
<rect x="729" y="582" width="6" height="6.5" fill="#ff6868"/>
<text x="735.5" y="589.8" font-size="11" text-anchor="start" fill="#353535">12</text>
<text x="714" y="596" font-size="10.5" text-anchor="end" fill="#353535">P3.2/INT0</text>
<line x1="723" y1="604" x2="750" y2="604" stroke="#a03a3a" stroke-width="2"/>
<rect x="729" y="595" width="6" height="6.5" fill="#ff6868"/>
<text x="735.5" y="602.8" font-size="11" text-anchor="start" fill="#353535">13</text>
<text x="714" y="609" font-size="10.5" text-anchor="end" fill="#353535">P3.3/INT1</text>
<line x1="723" y1="617" x2="750" y2="617" stroke="#a03a3a" stroke-width="2"/>
<rect x="729" y="608" width="6" height="6.5" fill="#ff6868"/>
<text x="735.5" y="615.8" font-size="11" text-anchor="start" fill="#353535">14</text>
<text x="714" y="622" font-size="10.5" text-anchor="end" fill="#353535">P3.4/T0</text>
<line x1="723" y1="630" x2="750" y2="630" stroke="#a03a3a" stroke-width="2"/>
<rect x="729" y="621" width="6" height="6.5" fill="#ff6868"/>
<text x="735.5" y="628.8" font-size="11" text-anchor="start" fill="#353535">15</text>
<text x="714" y="635" font-size="10.5" text-anchor="end" fill="#353535">P3.5/T1</text>
<line x1="723" y1="643" x2="750" y2="643" stroke="#a03a3a" stroke-width="2"/>
<rect x="729" y="634" width="6" height="6.5" fill="#ff6868"/>
<text x="735.5" y="641.8" font-size="11" text-anchor="start" fill="#353535">16</text>
<text x="714" y="648" font-size="10.5" text-anchor="end" fill="#353535">P3.6/WR</text>
<line x1="723" y1="656" x2="750" y2="656" stroke="#a03a3a" stroke-width="2"/>
<rect x="729" y="647" width="6" height="6.5" fill="#ff6868"/>
<text x="735.5" y="654.8" font-size="11" text-anchor="start" fill="#353535">17</text>
<text x="714" y="661" font-size="10.5" text-anchor="end" fill="#353535">P3.7/RD</text>
<line x1="516" y1="331" x2="542" y2="331" stroke="#a03a3a" stroke-width="2"/>
<text x="528.5" y="329.8" font-size="11" text-anchor="end" fill="#353535">19</text>
<text x="547.5" y="336" font-size="10.5" text-anchor="start" fill="#353535">XTAL1</text>
<line x1="516" y1="370" x2="542" y2="370" stroke="#a03a3a" stroke-width="2"/>
<text x="528.5" y="368.8" font-size="11" text-anchor="end" fill="#353535">18</text>
<text x="547.5" y="375" font-size="10.5" text-anchor="start" fill="#353535">XTAL2</text>
<line x1="516" y1="422" x2="542" y2="422" stroke="#a03a3a" stroke-width="2"/>
<rect x="531" y="413" width="6" height="6.5" fill="#ff6868"/>
<text x="528.5" y="420.8" font-size="11" text-anchor="end" fill="#353535">9</text>
<text x="547.5" y="427" font-size="10.5" text-anchor="start" fill="#353535">RST</text>
<line x1="516" y1="487" x2="542" y2="487" stroke="#a03a3a" stroke-width="2"/>
<rect x="531" y="478" width="6" height="6.5" fill="#ff6868"/>
<text x="528.5" y="485.8" font-size="11" text-anchor="end" fill="#353535">29</text>
<text x="547.5" y="492" font-size="10.5" text-anchor="start" fill="#353535">PSEN</text>
<line x1="516" y1="500" x2="542" y2="500" stroke="#a03a3a" stroke-width="2"/>
<rect x="531" y="491" width="6" height="6.5" fill="#ff6868"/>
<text x="528.5" y="498.8" font-size="11" text-anchor="end" fill="#353535">30</text>
<text x="547.5" y="505" font-size="10.5" text-anchor="start" fill="#353535">ALE</text>
<line x1="516" y1="513" x2="542" y2="513" stroke="#a03a3a" stroke-width="2"/>
<rect x="531" y="504" width="6" height="6.5" fill="#ff6868"/>
<text x="528.5" y="511.8" font-size="11" text-anchor="end" fill="#353535">31</text>
<text x="547.5" y="518" font-size="10.5" text-anchor="start" fill="#353535">EA</text>
<line x1="516" y1="565" x2="542" y2="565" stroke="#a03a3a" stroke-width="2"/>
<rect x="531" y="556" width="6" height="6.5" fill="#6a6aff"/>
<text x="528.5" y="563.8" font-size="11" text-anchor="end" fill="#353535">1</text>
<text x="547.5" y="570" font-size="10.5" text-anchor="start" fill="#353535">P1.0</text>
<line x1="516" y1="578" x2="542" y2="578" stroke="#a03a3a" stroke-width="2"/>
<rect x="531" y="569" width="6" height="6.5" fill="#ff6868"/>
<text x="528.5" y="576.8" font-size="11" text-anchor="end" fill="#353535">2</text>
<text x="547.5" y="583" font-size="10.5" text-anchor="start" fill="#353535">P1.1</text>
<line x1="516" y1="591" x2="542" y2="591" stroke="#a03a3a" stroke-width="2"/>
<rect x="531" y="582" width="6" height="6.5" fill="#ff6868"/>
<text x="528.5" y="589.8" font-size="11" text-anchor="end" fill="#353535">3</text>
<text x="547.5" y="596" font-size="10.5" text-anchor="start" fill="#353535">P1.2</text>
<line x1="516" y1="604" x2="542" y2="604" stroke="#a03a3a" stroke-width="2"/>
<rect x="531" y="595" width="6" height="6.5" fill="#ff6868"/>
<text x="528.5" y="602.8" font-size="11" text-anchor="end" fill="#353535">4</text>
<text x="547.5" y="609" font-size="10.5" text-anchor="start" fill="#353535">P1.3</text>
<line x1="516" y1="617" x2="542" y2="617" stroke="#a03a3a" stroke-width="2"/>
<rect x="531" y="608" width="6" height="6.5" fill="#ff6868"/>
<text x="528.5" y="615.8" font-size="11" text-anchor="end" fill="#353535">5</text>
<text x="547.5" y="622" font-size="10.5" text-anchor="start" fill="#353535">P1.4</text>
<line x1="516" y1="630" x2="542" y2="630" stroke="#a03a3a" stroke-width="2"/>
<rect x="531" y="621" width="6" height="6.5" fill="#ff6868"/>
<text x="528.5" y="628.8" font-size="11" text-anchor="end" fill="#353535">6</text>
<text x="547.5" y="635" font-size="10.5" text-anchor="start" fill="#353535">P1.5</text>
<line x1="516" y1="643" x2="542" y2="643" stroke="#a03a3a" stroke-width="2"/>
<rect x="531" y="634" width="6" height="6.5" fill="#ff6868"/>
<text x="528.5" y="641.8" font-size="11" text-anchor="end" fill="#353535">7</text>
<text x="547.5" y="648" font-size="10.5" text-anchor="start" fill="#353535">P1.6</text>
<line x1="516" y1="656" x2="542" y2="656" stroke="#a03a3a" stroke-width="2"/>
<rect x="531" y="647" width="6" height="6.5" fill="#ff6868"/>
<text x="528.5" y="654.8" font-size="11" text-anchor="end" fill="#353535">8</text>
<text x="547.5" y="661" font-size="10.5" text-anchor="start" fill="#353535">P1.7</text>
<text x="540.5" y="681" font-size="10.7" text-anchor="start" fill="#353535">AT89C51</text>
<polyline points="542,327 546.5,331 542,335" fill="none" stroke="#a03a3a" stroke-width="2"/>
<polyline points="750,331 1060,331 1060,241" fill="none" stroke="#356c35" stroke-width="2" stroke-linejoin="miter" stroke-linecap="square"/>
<polyline points="826,267 826,331" fill="none" stroke="#356c35" stroke-width="2" stroke-linejoin="miter" stroke-linecap="square"/>
<rect x="824" y="329" width="5" height="5" fill="#356c35"/>
<polyline points="750,344 1073,344 1073,241" fill="none" stroke="#356c35" stroke-width="2" stroke-linejoin="miter" stroke-linecap="square"/>
<polyline points="839,267 839,344" fill="none" stroke="#356c35" stroke-width="2" stroke-linejoin="miter" stroke-linecap="square"/>
<rect x="837" y="342" width="5" height="5" fill="#356c35"/>
<polyline points="750,357 1086,357 1086,241" fill="none" stroke="#356c35" stroke-width="2" stroke-linejoin="miter" stroke-linecap="square"/>
<polyline points="852,267 852,357" fill="none" stroke="#356c35" stroke-width="2" stroke-linejoin="miter" stroke-linecap="square"/>
<rect x="850" y="355" width="5" height="5" fill="#356c35"/>
<polyline points="750,370 1099,370 1099,241" fill="none" stroke="#356c35" stroke-width="2" stroke-linejoin="miter" stroke-linecap="square"/>
<polyline points="865,267 865,370" fill="none" stroke="#356c35" stroke-width="2" stroke-linejoin="miter" stroke-linecap="square"/>
<rect x="863" y="368" width="5" height="5" fill="#356c35"/>
<polyline points="750,383 1112,383 1112,241" fill="none" stroke="#356c35" stroke-width="2" stroke-linejoin="miter" stroke-linecap="square"/>
<polyline points="878,267 878,383" fill="none" stroke="#356c35" stroke-width="2" stroke-linejoin="miter" stroke-linecap="square"/>
<rect x="876" y="381" width="5" height="5" fill="#356c35"/>
<polyline points="750,396 1125,396 1125,241" fill="none" stroke="#356c35" stroke-width="2" stroke-linejoin="miter" stroke-linecap="square"/>
<polyline points="891,267 891,396" fill="none" stroke="#356c35" stroke-width="2" stroke-linejoin="miter" stroke-linecap="square"/>
<rect x="889" y="394" width="5" height="5" fill="#356c35"/>
<polyline points="750,409 1138,409 1138,241" fill="none" stroke="#356c35" stroke-width="2" stroke-linejoin="miter" stroke-linecap="square"/>
<polyline points="904,267 904,409" fill="none" stroke="#356c35" stroke-width="2" stroke-linejoin="miter" stroke-linecap="square"/>
<rect x="902" y="407" width="5" height="5" fill="#356c35"/>
<polyline points="750,422 1151,422 1151,241" fill="none" stroke="#356c35" stroke-width="2" stroke-linejoin="miter" stroke-linecap="square"/>
<polyline points="917,267 917,422" fill="none" stroke="#356c35" stroke-width="2" stroke-linejoin="miter" stroke-linecap="square"/>
<rect x="915" y="420" width="5" height="5" fill="#356c35"/>
<polyline points="750,513 1008,513 1008,241" fill="none" stroke="#356c35" stroke-width="2" stroke-linejoin="miter" stroke-linecap="square"/>
<polyline points="750,526 1021,526 1021,241" fill="none" stroke="#356c35" stroke-width="2" stroke-linejoin="miter" stroke-linecap="square"/>
<polyline points="750,539 1034,539 1034,241" fill="none" stroke="#356c35" stroke-width="2" stroke-linejoin="miter" stroke-linecap="square"/>
<polyline points="345,292 319,292 319,318" fill="none" stroke="#356c35" stroke-width="2" stroke-linejoin="miter" stroke-linecap="square"/>
<line x1="306" y1="318" x2="333" y2="318" stroke="#356c35" stroke-width="2"/>
<line x1="313" y1="325" x2="327" y2="325" stroke="#356c35" stroke-width="2"/>
<line x1="318" y1="331" x2="322" y2="331" stroke="#356c35" stroke-width="2"/>
<line x1="345" y1="292" x2="358" y2="292" stroke="#356c35" stroke-width="2"/>
<line x1="358" y1="292" x2="381" y2="292" stroke="#a03a3a" stroke-width="2"/>
<line x1="381" y1="279" x2="381" y2="305.5" stroke="#a03a3a" stroke-width="2"/>
<line x1="388" y1="279" x2="388" y2="305.5" stroke="#a03a3a" stroke-width="2"/>
<line x1="388" y1="292" x2="410.5" y2="292" stroke="#a03a3a" stroke-width="2"/>
<rect x="355.5" y="283.5" width="7.5" height="6.5" fill="#6a6aff"/>
<polyline points="410.5,292 488,292 488,331 516,331" fill="none" stroke="#356c35" stroke-width="2" stroke-linejoin="miter" stroke-linecap="square"/>
<rect x="343" y="290" width="5" height="5" fill="#356c35"/>
<rect x="434" y="290" width="5" height="5" fill="#356c35"/>
<text transform="translate(370.5,275) scale(1,1.15)" font-size="15" text-anchor="start" fill="#353535">C1</text>
<text x="369.5" y="317" font-size="10.5" text-anchor="start" fill="#353535">22pF</text>
<line x1="436" y1="292" x2="436" y2="305" stroke="#356c35" stroke-width="2"/>
<line x1="436" y1="305" x2="436" y2="318" stroke="#a03a3a" stroke-width="2"/>
<line x1="417" y1="318" x2="457" y2="318" stroke="#a03a3a" stroke-width="2"/>
<rect x="423.5" y="325.5" width="25" height="12" fill="#d6d5c0" stroke="#a03a3a" stroke-width="2"/>
<line x1="417" y1="344" x2="457" y2="344" stroke="#a03a3a" stroke-width="2"/>
<line x1="436" y1="344" x2="436" y2="358" stroke="#a03a3a" stroke-width="2"/>
<line x1="436" y1="358" x2="436" y2="370" stroke="#356c35" stroke-width="2"/>
<text transform="translate(464,332) scale(1,1.15)" font-size="15.5" text-anchor="start" fill="#353535">X1</text>
<text x="464" y="348" font-size="10.6" text-anchor="start" fill="#353535">11.0592MHz</text>
<line x1="345" y1="370" x2="358" y2="370" stroke="#356c35" stroke-width="2"/>
<line x1="358" y1="370" x2="381" y2="370" stroke="#a03a3a" stroke-width="2"/>
<line x1="381" y1="357" x2="381" y2="383.5" stroke="#a03a3a" stroke-width="2"/>
<line x1="388" y1="357" x2="388" y2="383.5" stroke="#a03a3a" stroke-width="2"/>
<line x1="388" y1="370" x2="410.5" y2="370" stroke="#a03a3a" stroke-width="2"/>
<rect x="355.5" y="361.5" width="7.5" height="6.5" fill="#6a6aff"/>
<line x1="410.5" y1="370" x2="516" y2="370" stroke="#356c35" stroke-width="2"/>
<rect x="343" y="368" width="5" height="5" fill="#356c35"/>
<rect x="434" y="368" width="5" height="5" fill="#356c35"/>
<text transform="translate(370.5,353.5) scale(1,1.15)" font-size="15" text-anchor="start" fill="#353535">C2</text>
<text x="369.5" y="395" font-size="10.5" text-anchor="start" fill="#353535">22pF</text>
<line x1="345" y1="292" x2="345" y2="423" stroke="#356c35" stroke-width="2"/>
<polyline points="344,422 410,422" fill="none" stroke="#356c35" stroke-width="2" stroke-linejoin="miter" stroke-linecap="square"/>
<line x1="410" y1="422" x2="423" y2="422" stroke="#a03a3a" stroke-width="2"/>
<rect x="423.5" y="417.5" width="38" height="10.5" fill="#d6d5c0" stroke="#a03a3a" stroke-width="2"/>
<line x1="462" y1="422" x2="476" y2="422" stroke="#a03a3a" stroke-width="2"/>
<line x1="476" y1="422" x2="516" y2="422" stroke="#356c35" stroke-width="2"/>
<rect x="486" y="420" width="5" height="5" fill="#356c35"/>
<rect x="407" y="413" width="8" height="6.5" fill="#6a6aff"/>
<rect x="472" y="413" width="8" height="6.5" fill="#ff6868"/>
<text transform="translate(422.5,412.5) scale(1,1.15)" font-size="15" text-anchor="start" fill="#353535">R1</text>
<text x="422" y="440" font-size="10.5" text-anchor="start" fill="#353535">10k</text>
<polyline points="488,422 488,474 450,474" fill="none" stroke="#356c35" stroke-width="2" stroke-linejoin="miter" stroke-linecap="square"/>
<line x1="345" y1="474" x2="397.5" y2="474" stroke="#356c35" stroke-width="2"/>
<line x1="397.5" y1="474" x2="413" y2="474" stroke="#a03a3a" stroke-width="2"/>
<rect x="413.5" y="461.5" width="6.5" height="25.5" fill="#d6d5c0" stroke="#a03a3a" stroke-width="2"/>
<defs><pattern id="hatch" width="4" height="4" patternUnits="userSpaceOnUse" patternTransform="rotate(-60)"><rect width="4" height="4" fill="#d6d5c0"/><rect width="2" height="4" fill="#a03a3a"/></pattern></defs>
<rect x="427" y="461.5" width="6.5" height="25.5" fill="url(#hatch)" stroke="#a03a3a" stroke-width="2"/>
<line x1="434.5" y1="474" x2="450" y2="474" stroke="#a03a3a" stroke-width="2"/>
<rect x="343" y="472" width="5" height="5" fill="#356c35"/>
<rect x="394" y="464" width="8" height="7" fill="#ff6868"/>
<rect x="446" y="464" width="8" height="7" fill="#ff6868"/>
<text transform="translate(409.5,457) scale(1,1.15)" font-size="15" text-anchor="start" fill="#353535">C3</text>
<text x="409" y="499.5" font-size="10.5" text-anchor="start" fill="#353535">10uF</text>
<polygon points="345,437 339.5,447.5 351.5,447.5" fill="none" stroke="#356c35" stroke-width="2"/>
<polyline points="345,448 345,513 516,513" fill="none" stroke="#356c35" stroke-width="2" stroke-linejoin="miter" stroke-linecap="square"/>
<rect x="473" y="511" width="5" height="5" fill="#356c35"/>
<text transform="translate(386,527) scale(1,1.15)" font-size="15.5" text-anchor="start" fill="#353535">U3</text>
<rect x="345" y="539" width="91" height="65" fill="#d6d5c0" stroke="#a03a3a" stroke-width="2"/>
<line x1="319" y1="552" x2="345" y2="552" stroke="#a03a3a" stroke-width="2"/>
<rect x="334" y="542.5" width="7" height="7" fill="#ff6868"/>
<text x="326" y="551" font-size="11" text-anchor="start" fill="#353535">1</text>
<text x="351.5" y="557" font-size="10.3" text-anchor="start" fill="#353535">CS</text>
<line x1="319" y1="565" x2="345" y2="565" stroke="#a03a3a" stroke-width="2"/>
<text x="326" y="564" font-size="11" text-anchor="start" fill="#353535">2</text>
<text x="351.5" y="570" font-size="10.3" text-anchor="start" fill="#353535">CH0</text>
<line x1="319" y1="578" x2="345" y2="578" stroke="#a03a3a" stroke-width="2"/>
<text x="326" y="577" font-size="11" text-anchor="start" fill="#353535">3</text>
<text x="351.5" y="583" font-size="10.3" text-anchor="start" fill="#353535">CH1</text>
<line x1="319" y1="591" x2="345" y2="591" stroke="#a03a3a" stroke-width="2"/>
<text x="326" y="590" font-size="11" text-anchor="start" fill="#353535">4</text>
<text x="351.5" y="596" font-size="10.3" text-anchor="start" fill="#353535">GND</text>
<line x1="436" y1="552" x2="462.5" y2="552" stroke="#a03a3a" stroke-width="2"/>
<text x="448.5" y="551" font-size="11" text-anchor="start" fill="#353535">8</text>
<text x="428.5" y="557" font-size="10.3" text-anchor="end" fill="#353535">VCC</text>
<line x1="436" y1="565" x2="462.5" y2="565" stroke="#a03a3a" stroke-width="2"/>
<rect x="442" y="555.5" width="7" height="7" fill="#6a6aff"/>
<text x="448.5" y="564" font-size="11" text-anchor="start" fill="#353535">7</text>
<text x="428.5" y="570" font-size="10.3" text-anchor="end" fill="#353535">CLK</text>
<line x1="436" y1="578" x2="462.5" y2="578" stroke="#a03a3a" stroke-width="2"/>
<rect x="442" y="568.5" width="7" height="7" fill="#ff6868"/>
<text x="448.5" y="577" font-size="11" text-anchor="start" fill="#353535">5</text>
<text x="428.5" y="583" font-size="10.3" text-anchor="end" fill="#353535">DI</text>
<line x1="436" y1="591" x2="462.5" y2="591" stroke="#a03a3a" stroke-width="2"/>
<rect x="442" y="581.5" width="7" height="7" fill="#ff6868"/>
<text x="448.5" y="590" font-size="11" text-anchor="start" fill="#353535">6</text>
<text x="428.5" y="596" font-size="10.3" text-anchor="end" fill="#353535">DO</text>
<line x1="352" y1="546.5" x2="368" y2="546.5" stroke="#353535" stroke-width="1"/>
<text x="344.5" y="616" font-size="10.3" text-anchor="start" fill="#353535">ADC0832</text>
<polyline points="319,552 312.5,552 312.5,531 488,531 488,604 516,604" fill="none" stroke="#356c35" stroke-width="2" stroke-linejoin="miter" stroke-linecap="square"/>
<polyline points="462.5,552 475,552 475,513" fill="none" stroke="#356c35" stroke-width="2" stroke-linejoin="miter" stroke-linecap="square"/>
<line x1="462.5" y1="565" x2="516" y2="565" stroke="#356c35" stroke-width="2"/>
<line x1="462.5" y1="578" x2="516" y2="578" stroke="#356c35" stroke-width="2"/>
<rect x="473" y="576" width="5" height="5" fill="#356c35"/>
<polyline points="462.5,591 475,591 475,578" fill="none" stroke="#356c35" stroke-width="2" stroke-linejoin="miter" stroke-linecap="square"/>
<polyline points="319,591 306,591 306,617" fill="none" stroke="#356c35" stroke-width="2" stroke-linejoin="miter" stroke-linecap="square"/>
<line x1="293" y1="617" x2="320" y2="617" stroke="#356c35" stroke-width="2"/>
<line x1="300" y1="623" x2="314" y2="623" stroke="#356c35" stroke-width="2"/>
<line x1="303.5" y1="629.5" x2="307.5" y2="629.5" stroke="#356c35" stroke-width="2"/>
<polyline points="319,565 241,565 241,487 111.5,487" fill="none" stroke="#356c35" stroke-width="2" stroke-linejoin="miter" stroke-linecap="square"/>
<rect x="148" y="485" width="5" height="5" fill="#356c35"/>
<polyline points="319,578 241,578 241,669 202.5,669" fill="none" stroke="#356c35" stroke-width="2" stroke-linejoin="miter" stroke-linecap="square"/>
<rect x="239" y="667" width="5" height="5" fill="#356c35"/>
<polygon points="85,409.5 79,420.5 91,420.5" fill="none" stroke="#356c35" stroke-width="2"/>
<line x1="85" y1="421" x2="85" y2="453" stroke="#356c35" stroke-width="2"/>
<line x1="85" y1="453" x2="85" y2="466" stroke="#a03a3a" stroke-width="2"/>
<rect x="80" y="467" width="11" height="39" fill="#d6d5c0" stroke="#a03a3a" stroke-width="2"/>
<line x1="85" y1="507" x2="85" y2="526.5" stroke="#a03a3a" stroke-width="2"/>
<line x1="85" y1="526.5" x2="85" y2="617" stroke="#356c35" stroke-width="2"/>
<rect x="83" y="589" width="5" height="5" fill="#356c35"/>
<line x1="72.5" y1="617" x2="98.5" y2="617" stroke="#356c35" stroke-width="2"/>
<line x1="78" y1="623" x2="93" y2="623" stroke="#356c35" stroke-width="2"/>
<line x1="83" y1="630" x2="87" y2="630" stroke="#356c35" stroke-width="2"/>
<rect x="76" y="445.5" width="7" height="7.5" fill="#ff6868"/>
<rect x="76" y="522.5" width="7" height="7" fill="#6a6aff"/>
<text transform="translate(87.5,458) scale(1,1.15)" font-size="15.5" text-anchor="start" fill="#353535">RV2</text>
<text x="86.5" y="525.5" font-size="10.5" text-anchor="start" fill="#353535">10k</text>
<circle cx="70.4" cy="472.5" r="5" fill="#6e3838" stroke="#ff3a3a" stroke-width="1.2"/>
<path d="M70.4,469.5 L70.4,475.5 M68.4,471.5 L70.4,469.5 L72.4,471.5" stroke="#ff4040" stroke-width="1.2" fill="none"/>
<circle cx="70.4" cy="501.5" r="5" fill="#6e3838" stroke="#ff3a3a" stroke-width="1.2"/>
<path d="M70.4,498.5 L70.4,504.5 M68.4,502.5 L70.4,504.5 L72.4,502.5" stroke="#ff4040" stroke-width="1.2" fill="none"/>
<path d="M92,483.5 L96,481 L96,486  Z" fill="#a03a3a" stroke="#a03a3a" stroke-width="1"/>
<polyline points="92,483.5 97,483.5 97,487 111.5,487" fill="none" stroke="#a03a3a" stroke-width="2" stroke-linejoin="miter" stroke-linecap="square"/>
<text transform="translate(83,486.5) rotate(90)" font-size="6.5" text-anchor="middle" fill="#c83030">%29</text>
<polygon points="176,591.5 170,602.5 182,602.5" fill="none" stroke="#356c35" stroke-width="2"/>
<line x1="176" y1="603" x2="176" y2="635.5" stroke="#356c35" stroke-width="2"/>
<line x1="176" y1="635.5" x2="176" y2="648.5" stroke="#a03a3a" stroke-width="2"/>
<rect x="171" y="649.5" width="11" height="38.0" fill="#d6d5c0" stroke="#a03a3a" stroke-width="2"/>
<line x1="176" y1="688.5" x2="176" y2="708.0" stroke="#a03a3a" stroke-width="2"/>
<line x1="176" y1="708.0" x2="176" y2="799" stroke="#356c35" stroke-width="2"/>
<rect x="174" y="772" width="5" height="5" fill="#356c35"/>
<line x1="163.5" y1="799" x2="189.5" y2="799" stroke="#356c35" stroke-width="2"/>
<line x1="169" y1="805" x2="184" y2="805" stroke="#356c35" stroke-width="2"/>
<line x1="174" y1="812" x2="178" y2="812" stroke="#356c35" stroke-width="2"/>
<rect x="167" y="626.5" width="7" height="7.5" fill="#ff6868"/>
<rect x="167" y="704.5" width="7" height="7" fill="#6a6aff"/>
<text transform="translate(191,651) scale(1,1.15)" font-size="15.5" text-anchor="start" fill="#353535">RV1</text>
<text x="190" y="694" font-size="10.5" text-anchor="start" fill="#353535">10k</text>
<circle cx="161.4" cy="654.5" r="5" fill="#6e3838" stroke="#ff3a3a" stroke-width="1.2"/>
<path d="M161.4,651.5 L161.4,657.5 M159.4,653.5 L161.4,651.5 L163.4,653.5" stroke="#ff4040" stroke-width="1.2" fill="none"/>
<circle cx="161.4" cy="683.7" r="5" fill="#6e3838" stroke="#ff3a3a" stroke-width="1.2"/>
<path d="M161.4,680.7 L161.4,686.7 M159.4,684.7 L161.4,686.7 L163.4,684.7" stroke="#ff4040" stroke-width="1.2" fill="none"/>
<path d="M183,665.5 L187,663 L187,668  Z" fill="#a03a3a" stroke="#a03a3a" stroke-width="1"/>
<polyline points="183,665.5 188,665.5 188,669 202.5,669" fill="none" stroke="#a03a3a" stroke-width="2" stroke-linejoin="miter" stroke-linecap="square"/>
<text transform="translate(174,668.5) rotate(90)" font-size="6.5" text-anchor="middle" fill="#c83030">%29</text>
<line x1="150.5" y1="487" x2="150.5" y2="500.0" stroke="#356c35" stroke-width="2"/>
<line x1="150.5" y1="500.0" x2="150.5" y2="513.5" stroke="#a03a3a" stroke-width="2"/>
<circle cx="150.5" cy="539.5" r="25.3" fill="#d6d5c0" stroke="#a03a3a" stroke-width="2"/>
<rect x="132.5" y="529.0" width="37" height="12.5" fill="#3b6a3b" stroke="#3cf03c" stroke-width="1.5"/>
<text x="149.5" y="539.0" font-size="10.8" text-anchor="middle" fill="#70ff70">+3.10</text>
<text x="151.0" y="554.0" font-size="10" text-anchor="middle" fill="#a04040" font-style="italic">Volts</text>
<line x1="150.5" y1="565.5" x2="150.5" y2="579.0" stroke="#a03a3a" stroke-width="2"/>
<polyline points="150.5,579.0 150.5,591 85,591" fill="none" stroke="#356c35" stroke-width="2" stroke-linejoin="miter" stroke-linecap="square"/>
<text x="143.5" y="507.5" font-size="11" text-anchor="middle" fill="#9a3434">+</text>
<text x="143.5" y="577.5" font-size="11" text-anchor="middle" fill="#9a3434">−</text>
<rect x="154.5" y="574.0" width="7" height="7.5" fill="#6a6aff"/>
<line x1="241.5" y1="669" x2="241.5" y2="682.0" stroke="#356c35" stroke-width="2"/>
<line x1="241.5" y1="682.0" x2="241.5" y2="695.5" stroke="#a03a3a" stroke-width="2"/>
<circle cx="241.5" cy="721.5" r="25.3" fill="#d6d5c0" stroke="#a03a3a" stroke-width="2"/>
<rect x="223.5" y="711.0" width="37" height="12.5" fill="#3b6a3b" stroke="#3cf03c" stroke-width="1.5"/>
<text x="240.5" y="721.0" font-size="10.8" text-anchor="middle" fill="#70ff70">+3.45</text>
<text x="242.0" y="736.0" font-size="10" text-anchor="middle" fill="#a04040" font-style="italic">Volts</text>
<line x1="241.5" y1="747.5" x2="241.5" y2="761.0" stroke="#a03a3a" stroke-width="2"/>
<polyline points="241.5,761.0 241.5,774 176,774" fill="none" stroke="#356c35" stroke-width="2" stroke-linejoin="miter" stroke-linecap="square"/>
<text x="234.5" y="689.5" font-size="11" text-anchor="middle" fill="#9a3434">+</text>
<text x="234.5" y="759.5" font-size="11" text-anchor="middle" fill="#9a3434">−</text>
<rect x="245.5" y="756.0" width="7" height="7.5" fill="#6a6aff"/>
<line x1="547.5" y1="480.5" x2="576.094453125" y2="480.5" stroke="#353535" stroke-width="1"/>
<line x1="547.5" y1="493.5" x2="567.346640625" y2="493.5" stroke="#353535" stroke-width="1"/>
<line x1="547.5" y1="506.5" x2="561.50765625" y2="506.5" stroke="#353535" stroke-width="1"/>
<line x1="691.2478125" y1="584.5" x2="714" y2="584.5" stroke="#353535" stroke-width="1"/>
<line x1="691.2478125" y1="597.5" x2="714" y2="597.5" stroke="#353535" stroke-width="1"/>
<line x1="696.506015625" y1="636.5" x2="714" y2="636.5" stroke="#353535" stroke-width="1"/>
<line x1="698.8340625" y1="649.5" x2="714" y2="649.5" stroke="#353535" stroke-width="1"/>
<text transform="translate(246,680) scale(1.075,1)" font-size="19.6" fill="none" stroke="#ffffff" stroke-width="3" stroke-linejoin="round">www.dzkfw.com.cn</text>
<text transform="translate(246,680) scale(1.075,1)" font-size="19.6" fill="#66b652" stroke="#66b652" stroke-width="0.45">www.dzkfw.com.cn</text>
<text transform="translate(951.5,690.5) rotate(-32) scale(1.075,1)" font-size="19.6" fill="none" stroke="#ffffff" stroke-width="3" stroke-linejoin="round">www.dzkfw.com.cn</text>
<text transform="translate(951.5,690.5) rotate(-32) scale(1.075,1)" font-size="19.6" fill="#66b652" stroke="#66b652" stroke-width="0.45">www.dzkfw.com.cn</text>
<path d="M247.8,691.2 H260.3 V702.3 H247.8 Z M247.8,696.7 H260.3 M254.1,689 V703.5 Q254.1,704.8 256,704.8 H262 Q263,704.8 263.2,701.5 M267.1,690.4 H280.6 L274.2,694.8 M265.5,697.1 H282.6 M274.2,694.8 V704 Q274.2,705.5 272,705.5 H269 M285.4,690.6 H300.5 M284.2,697.1 H301.3 M290.3,690.6 V698 Q290,703.5 284.8,705.8 M296.2,690.6 V705.8 M305.2,689.5 L306.2,693.5 M314.5,689.6 L317.2,692.6 M303.3,694.8 H320.6 M309.6,689.6 Q309,700 303.5,705.8 M307.8,698.2 H316.2 Q313.5,703.5 306.3,705.6 M309.8,699.5 Q313.5,704.5 320.5,705.6 M323.8,705.8 V690.6 H337.6 V704.5 Q337.6,705.6 335,705.6 M325.7,693.5 L331.2,703.5 M330.5,693.5 L326,703.5 M330.7,693.5 L336.2,703.5 M335.5,693.5 L331,703.5" fill="none" stroke="#ffffff" stroke-opacity="0.75" stroke-width="3" stroke-linecap="round" stroke-linejoin="round"/>
<path d="M247.8,691.2 H260.3 V702.3 H247.8 Z M247.8,696.7 H260.3 M254.1,689 V703.5 Q254.1,704.8 256,704.8 H262 Q263,704.8 263.2,701.5 M267.1,690.4 H280.6 L274.2,694.8 M265.5,697.1 H282.6 M274.2,694.8 V704 Q274.2,705.5 272,705.5 H269 M285.4,690.6 H300.5 M284.2,697.1 H301.3 M290.3,690.6 V698 Q290,703.5 284.8,705.8 M296.2,690.6 V705.8 M305.2,689.5 L306.2,693.5 M314.5,689.6 L317.2,692.6 M303.3,694.8 H320.6 M309.6,689.6 Q309,700 303.5,705.8 M307.8,698.2 H316.2 Q313.5,703.5 306.3,705.6 M309.8,699.5 Q313.5,704.5 320.5,705.6 M323.8,705.8 V690.6 H337.6 V704.5 Q337.6,705.6 335,705.6 M325.7,693.5 L331.2,703.5 M330.5,693.5 L326,703.5 M330.7,693.5 L336.2,703.5 M335.5,693.5 L331,703.5" fill="none" stroke="#66b652" stroke-width="1.5" stroke-linejoin="round"/>
<text x="20" y="20" font-size="10" text-anchor="start" fill="#353535"></text>
</svg></body></html>
